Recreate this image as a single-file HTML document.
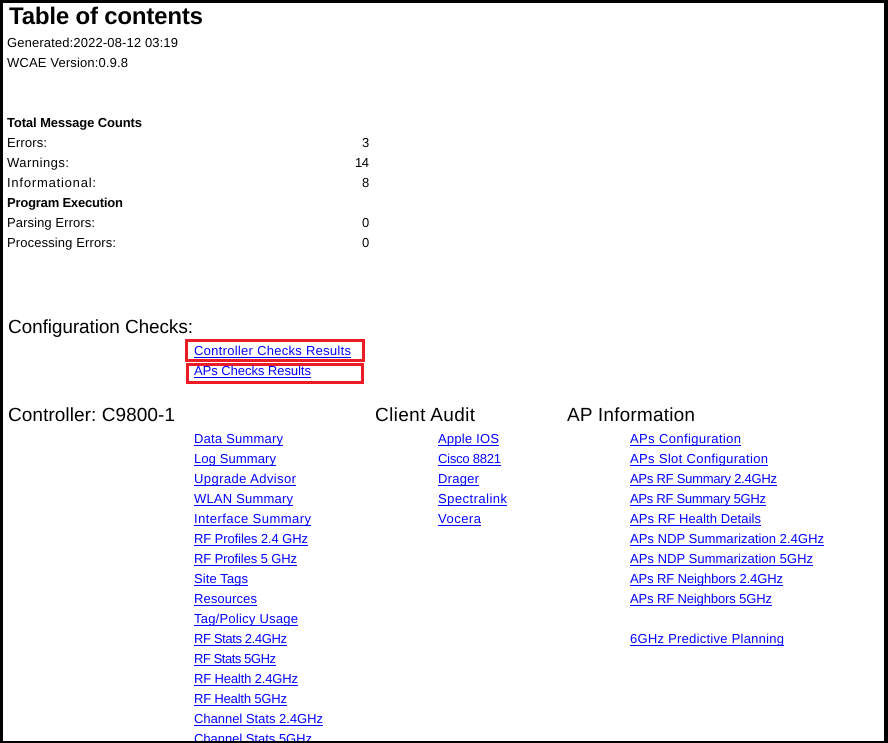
<!DOCTYPE html>
<html lang="en">
<head>
<meta charset="utf-8">
<title>Table of contents</title>
<style>
html,body{margin:0;padding:0;background:#000;width:888px;height:743px;overflow:hidden}
svg{display:block;position:absolute;left:0;top:0}
text{font-family:"Liberation Sans",Arial,sans-serif;font-size:13px;fill:#000;text-rendering:geometricPrecision}
.b{font-weight:700}
.h{font-size:19px}
.t{font-size:24px;font-weight:700}
.l{fill:#0000ff}
.u{fill:#0000ff}
</style>
</head>
<body>
<svg width="888" height="743" viewBox="0 0 888 743" xmlns="http://www.w3.org/2000/svg">
<defs><clipPath id="c"><rect x="3" y="3" width="881" height="738"/></clipPath></defs>
<rect width="888" height="743" fill="#000"/>
<rect x="3" y="3" width="881" height="738" fill="#fff"/>
<g clip-path="url(#c)">
<text class="t" x="9" y="24" textLength="194">Table of contents</text>
<text x="7" y="47" textLength="171">Generated:2022-08-12 03:19</text>
<text x="7" y="67" textLength="121">WCAE Version:0.9.8</text>
<text class="b" x="7" y="127" textLength="135">Total Message Counts</text>
<text x="7" y="147" textLength="40">Errors:</text>
<text x="7" y="167" textLength="62">Warnings:</text>
<text x="7" y="187" textLength="89">Informational:</text>
<text class="b" x="7" y="207" textLength="116">Program Execution</text>
<text x="7" y="227" textLength="88">Parsing Errors:</text>
<text x="7" y="247" textLength="109">Processing Errors:</text>
<text x="362" y="147">3</text>
<text x="355" y="167" textLength="14">14</text>
<text x="362" y="187">8</text>
<text x="362" y="227">0</text>
<text x="362" y="247">0</text>
<text class="h" x="8" y="333" textLength="185">Configuration Checks:</text>
<text class="h" x="8" y="421" textLength="167">Controller: C9800-1</text>
<text class="h" x="375" y="421" textLength="100">Client Audit</text>
<text class="h" x="567" y="421" textLength="128">AP Information</text>

<rect x="186.5" y="340.5" width="177" height="20" fill="none" stroke="#ed1c24" stroke-width="3"/>
<rect x="187.5" y="364.5" width="175" height="18" fill="none" stroke="#ed1c24" stroke-width="3"/>

<text class="l" x="194" y="355" textLength="157">Controller Checks Results</text><rect class="u" x="194" y="357" width="157" height="1"/>
<text class="l" x="194" y="375" textLength="117">APs Checks Results</text><rect class="u" x="194" y="377" width="117" height="1"/>

<text class="l" x="194" y="443" textLength="89">Data Summary</text><rect class="u" x="194" y="445" width="89" height="1"/>
<text class="l" x="194" y="463" textLength="82">Log Summary</text><rect class="u" x="194" y="465" width="82" height="1"/>
<text class="l" x="194" y="483" textLength="102">Upgrade Advisor</text><rect class="u" x="194" y="485" width="102" height="1"/>
<text class="l" x="194" y="503" textLength="99">WLAN Summary</text><rect class="u" x="194" y="505" width="99" height="1"/>
<text class="l" x="194" y="523" textLength="117">Interface Summary</text><rect class="u" x="194" y="525" width="117" height="1"/>
<text class="l" x="194" y="543" textLength="114">RF Profiles 2.4 GHz</text><rect class="u" x="194" y="545" width="114" height="1"/>
<text class="l" x="194" y="563" textLength="103">RF Profiles 5 GHz</text><rect class="u" x="194" y="565" width="103" height="1"/>
<text class="l" x="194" y="583" textLength="54">Site Tags</text><rect class="u" x="194" y="585" width="54" height="1"/>
<text class="l" x="194" y="603" textLength="63">Resources</text><rect class="u" x="194" y="605" width="63" height="1"/>
<text class="l" x="194" y="623" textLength="104">Tag/Policy Usage</text><rect class="u" x="194" y="625" width="104" height="1"/>
<text class="l" x="194" y="643" textLength="93">RF Stats 2.4GHz</text><rect class="u" x="194" y="645" width="93" height="1"/>
<text class="l" x="194" y="663" textLength="82">RF Stats 5GHz</text><rect class="u" x="194" y="665" width="82" height="1"/>
<text class="l" x="194" y="683" textLength="104">RF Health 2.4GHz</text><rect class="u" x="194" y="685" width="104" height="1"/>
<text class="l" x="194" y="703" textLength="93">RF Health 5GHz</text><rect class="u" x="194" y="705" width="93" height="1"/>
<text class="l" x="194" y="723" textLength="129">Channel Stats 2.4GHz</text><rect class="u" x="194" y="725" width="129" height="1"/>
<text class="l" x="194" y="743" textLength="118">Channel Stats 5GHz</text>

<text class="l" x="438" y="443" textLength="61">Apple IOS</text><rect class="u" x="438" y="445" width="61" height="1"/>
<text class="l" x="438" y="463" textLength="63">Cisco 8821</text><rect class="u" x="438" y="465" width="63" height="1"/>
<text class="l" x="438" y="483" textLength="41">Drager</text><rect class="u" x="438" y="485" width="41" height="1"/>
<text class="l" x="438" y="503" textLength="69">Spectralink</text><rect class="u" x="438" y="505" width="69" height="1"/>
<text class="l" x="438" y="523" textLength="43">Vocera</text><rect class="u" x="438" y="525" width="43" height="1"/>

<text class="l" x="630" y="443" textLength="111">APs Configuration</text><rect class="u" x="630" y="445" width="111" height="1"/>
<text class="l" x="630" y="463" textLength="138">APs Slot Configuration</text><rect class="u" x="630" y="465" width="138" height="1"/>
<text class="l" x="630" y="483" textLength="147">APs RF Summary 2.4GHz</text><rect class="u" x="630" y="485" width="147" height="1"/>
<text class="l" x="630" y="503" textLength="136">APs RF Summary 5GHz</text><rect class="u" x="630" y="505" width="136" height="1"/>
<text class="l" x="630" y="523" textLength="131">APs RF Health Details</text><rect class="u" x="630" y="525" width="131" height="1"/>
<text class="l" x="630" y="543" textLength="194">APs NDP Summarization 2.4GHz</text><rect class="u" x="630" y="545" width="194" height="1"/>
<text class="l" x="630" y="563" textLength="183">APs NDP Summarization 5GHz</text><rect class="u" x="630" y="565" width="183" height="1"/>
<text class="l" x="630" y="583" textLength="153">APs RF Neighbors 2.4GHz</text><rect class="u" x="630" y="585" width="153" height="1"/>
<text class="l" x="630" y="603" textLength="142">APs RF Neighbors 5GHz</text><rect class="u" x="630" y="605" width="142" height="1"/>
<text class="l" x="630" y="643" textLength="154">6GHz Predictive Planning</text><rect class="u" x="630" y="645" width="154" height="1"/>
</g>
</svg>
</body>
</html>
